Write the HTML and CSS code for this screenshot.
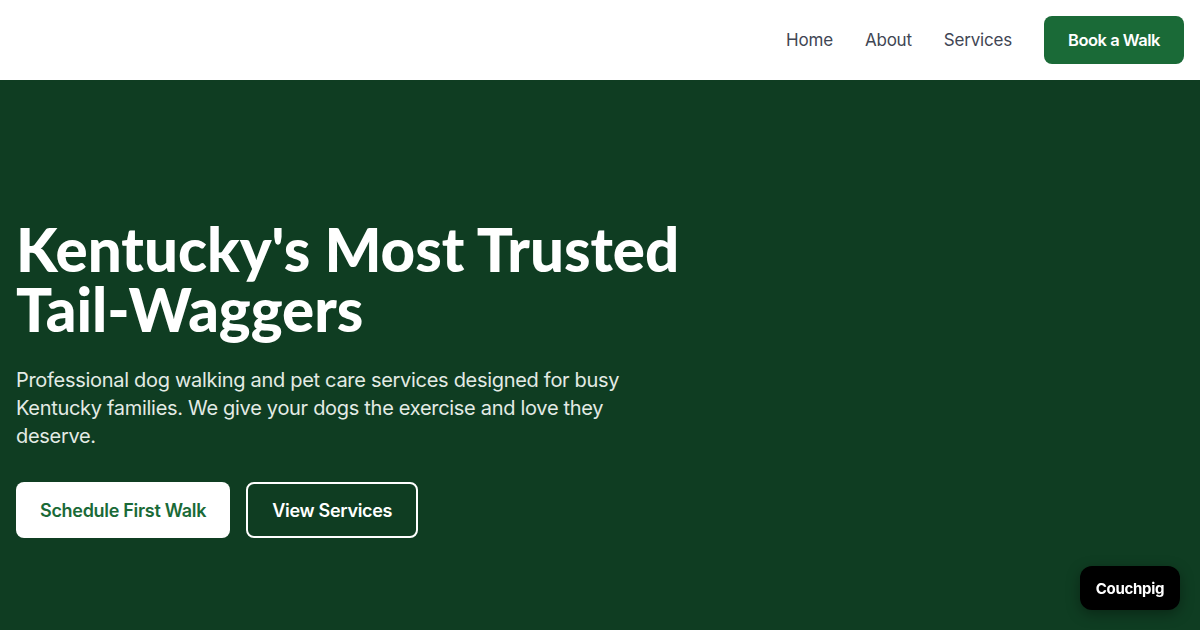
FILE: index.html
```html
<!DOCTYPE html>
<html lang="en">
<head>
    <meta charset="UTF-8">
    <meta name="viewport" content="width=device-width, initial-scale=1.0">
    <title>Kentucky Dog Walking</title>
    <link rel="stylesheet" href="styles.css">
</head>
<body>
    <header class="site-header">
        <nav class="nav">
            <a href="#" class="nav-link">Home</a>
            <a href="#" class="nav-link">About</a>
            <a href="#" class="nav-link">Services</a>
            <a href="#" class="btn-book">Book a Walk</a>
        </nav>
    </header>

    <section class="hero">
        <div class="hero-inner">
            <h1>Kentucky's Most Trusted Tail-Waggers</h1>
            <p class="lead">Professional dog walking and pet care services designed for busy Kentucky families. We give your dogs the exercise and love they deserve.</p>
            <div class="actions">
                <a href="#" class="btn btn-light">Schedule First Walk</a>
                <a href="#" class="btn btn-outline">View Services</a>
            </div>
        </div>
    </section>

    <div class="badge">Couchpig</div>
</body>
</html>
```

FILE: styles.css
```css
body {
    margin: 0;
    padding: 0;
    font-family: Inter, "Noto Sans", sans-serif;
    background: #0f3d22;
    height: 630px;
    overflow: hidden;
}

a {
    text-decoration: none;
}

.site-header {
    background: #fff;
    height: 80px;
    display: flex;
    align-items: center;
    justify-content: flex-end;
    padding: 0 16px;
}

.nav {
    display: flex;
    align-items: center;
}

.nav-link {
    color: #3f4654;
    font-size: 17px;
    margin-right: 32px;
    letter-spacing: -0.2px;
}

.btn-book {
    background: #1a6a37;
    color: #fff;
    font-size: 16.5px;
    font-weight: 600;
    height: 48px;
    width: 140px;
    display: flex;
    align-items: center;
    justify-content: center;
    border-radius: 8px;
    letter-spacing: -0.5px;
}

.hero {
    height: 550px;
    padding: 0 16px;
}

.hero-inner {
    padding-top: 139px;
}

h1 {
    margin: 0;
    color: #fff;
    font-family: Lato, sans-serif;
    font-weight: 900;
    font-size: 60px;
    line-height: 60px;
    max-width: 700px;
    letter-spacing: 0;
}

.lead {
    margin: 27px 0 0;
    color: #e3ebe5;
    font-size: 20px;
    line-height: 28px;
    max-width: 640px;
    letter-spacing: -0.3px;
}

.actions {
    display: flex;
    gap: 16px;
    margin-top: 32px;
}

.btn {
    height: 56px;
    box-sizing: border-box;
    display: flex;
    align-items: center;
    padding: 0 24px;
    border-radius: 8px;
    font-size: 18px;
    font-weight: 600;
    letter-spacing: -0.3px;
}

.btn-light {
    background: #fff;
    color: #1a6a37;
}

.btn-outline {
    border: 2px solid #fff;
    color: #fff;
}

.badge {
    position: fixed;
    right: 20px;
    bottom: 20px;
    background: #000;
    color: #fff;
    font-weight: 700;
    font-size: 15px;
    width: 100px;
    height: 44px;
    display: flex;
    align-items: center;
    justify-content: center;
    border-radius: 12px;
    box-shadow: 0 4px 14px rgba(0, 0, 0, 0.35);
    letter-spacing: -0.3px;
}
```
